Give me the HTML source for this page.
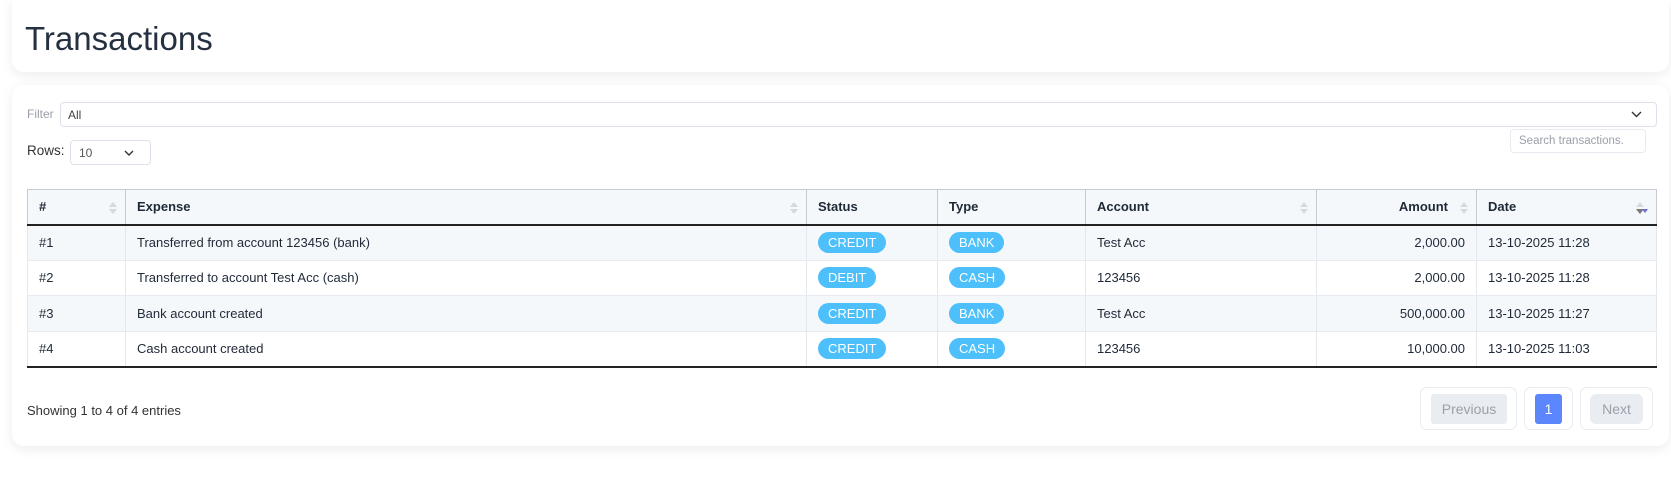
<!DOCTYPE html>
<html><head><meta charset="utf-8"><style>
*{box-sizing:border-box;margin:0;padding:0}
body{width:1671px;height:492px;background:#fff;font-family:"Liberation Sans",sans-serif;color:#1f2937;position:relative;overflow:hidden}
.card{position:absolute;left:12px;right:2px;background:#fff;border-radius:12px;box-shadow:0 3px 12px rgba(0,0,0,0.08)}
.abs{position:absolute}
table{position:absolute;left:27px;top:189px;width:1630px;border-collapse:collapse;font-size:13px}
th,td{border-left:1px solid #e3e8ef;border-right:1px solid #e3e8ef;padding:0 11px;text-align:left}
th{height:35px;background:#f5f8fb;font-weight:bold;border-top:1px solid #c8ccd2;border-left-color:#c8ccd2;border-right-color:#c8ccd2;border-bottom:2px solid #222;position:relative}
td{height:35.5px;border-bottom:1px solid #e6ebf2}
tr.o td{background:#f5f8fb}
tr:last-child td{border-bottom:2px solid #222}
.b{display:inline-block;background:#4dbffa;color:#fff;border-radius:11px;padding:0 10px;height:21px;line-height:21px;font-size:13px}
.s{position:absolute;right:8px;top:12px;width:8px;height:12px}
.r{text-align:right}
.btn{position:absolute;top:387px;height:43px;border:1px solid #e8ecf1;border-radius:7px}
.in{position:absolute;top:6px;height:30px;border-radius:3px;line-height:30px;text-align:center;font-size:14px}
</style></head><body>
<div class="card" style="top:0;height:72px;border-radius:0 0 12px 12px">
<div class="abs" style="left:13px;top:20px;font-size:33px;color:#253040">Transactions</div>
</div>
<div class="card" style="top:85px;height:361px"></div>
<div class="abs" style="left:27px;top:107px;font-size:12px;color:#9aa0aa">Filter</div>
<div class="abs" style="left:60px;top:102px;width:1597px;height:25px;border:1px solid #dde2ea;border-radius:4px;font-size:12px;color:#444;padding:5px 7px">All
<svg class="abs" style="right:14px;top:8px" width="11" height="7" viewBox="0 0 11 7"><path d="M1 1l4.5 4.5L10 1" fill="none" stroke="#333" stroke-width="1.4"/></svg></div>
<div class="abs" style="left:27px;top:143px;font-size:13.5px;color:#333">Rows:</div>
<div class="abs" style="left:70px;top:140px;width:81px;height:25px;border:1px solid #dde2ea;border-radius:4px;font-size:12px;color:#555;padding:5px 8px">10
<svg class="abs" style="left:53px;top:9px" width="10" height="6" viewBox="0 0 10 6"><path d="M1 1l4 4 4-4" fill="none" stroke="#333" stroke-width="1.4"/></svg></div>
<div class="abs" style="left:1510px;top:129px;width:136px;height:24px;border:1px solid #e6ebf1;border-radius:4px;font-size:11.5px;color:#9aa0aa;padding:5px 8px">Search transactions.</div>
<table>
<tr><th style="width:98px">#<svg class="s" viewBox="0 0 8 12"><path d="M4 0L8 5H0zM4 12L0 7h8z" fill="#d5d8dd"/></svg></th>
<th style="width:681px">Expense<svg class="s" viewBox="0 0 8 12"><path d="M4 0L8 5H0zM4 12L0 7h8z" fill="#d5d8dd"/></svg></th>
<th style="width:131px">Status</th><th style="width:148px">Type</th>
<th style="width:231px">Account<svg class="s" viewBox="0 0 8 12"><path d="M4 0L8 5H0zM4 12L0 7h8z" fill="#d5d8dd"/></svg></th>
<th class="r" style="width:160px;padding-right:28px">Amount<svg class="s" viewBox="0 0 8 12"><path d="M4 0L8 5H0zM4 12L0 7h8z" fill="#d5d8dd"/></svg></th>
<th>Date<svg class="s" style="width:12px" viewBox="0 0 12 12"><path d="M4 0L8 5H0z" fill="#d5d8dd"/><path d="M4 12L0 7h8z" fill="#777"/><path d="M6 7h6l-3 4z" fill="#6b6bdc"/></svg></th></tr>
<tr class="o"><td>#1</td><td>Transferred from account 123456 (bank)</td><td><span class="b">CREDIT</span></td><td><span class="b">BANK</span></td><td>Test Acc</td><td class="r">2,000.00</td><td>13-10-2025 11:28</td></tr>
<tr><td>#2</td><td>Transferred to account Test Acc (cash)</td><td><span class="b">DEBIT</span></td><td><span class="b">CASH</span></td><td>123456</td><td class="r">2,000.00</td><td>13-10-2025 11:28</td></tr>
<tr class="o"><td>#3</td><td>Bank account created</td><td><span class="b">CREDIT</span></td><td><span class="b">BANK</span></td><td>Test Acc</td><td class="r">500,000.00</td><td>13-10-2025 11:27</td></tr>
<tr><td>#4</td><td>Cash account created</td><td><span class="b">CREDIT</span></td><td><span class="b">CASH</span></td><td>123456</td><td class="r">10,000.00</td><td>13-10-2025 11:03</td></tr>
</table>
<div class="abs" style="left:27px;top:403px;font-size:13px;color:#333">Showing 1 to 4 of 4 entries</div>
<div class="btn" style="left:1420px;width:97px"><div class="in" style="left:10px;width:76px;background:#e9edf2;color:#9aa0aa">Previous</div></div>
<div class="btn" style="left:1524px;width:49px"><div class="in" style="left:10px;width:27px;background:#5b86fc;color:#fff">1</div></div>
<div class="btn" style="left:1580px;width:73px"><div class="in" style="left:9px;width:53px;background:#e9edf2;color:#9aa0aa;border-radius:6px">Next</div></div>
</body></html>
